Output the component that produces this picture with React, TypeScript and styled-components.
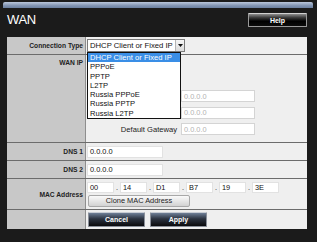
import React from "react";
import styled, { createGlobalStyle } from "styled-components";

const Global = createGlobalStyle`
  html, body { margin: 0; padding: 0; background: #1a1a1a; }
  body { font-family: "Liberation Sans", Arial, sans-serif; }
`;

const Frame = styled.div`
  width: 317px;
  height: 242px;
  background: #1b1b1b;
  overflow: hidden;
  display: flex;
  flex-direction: column;
`;

const TopBand = styled.div`
  height: 6px;
  margin: 2px 4px 0 3px;
  border-radius: 2px 2px 0 0;
  background: linear-gradient(#bac7db, #8194b2 60%, #6a7f9f);
`;

const Header = styled.div`
  height: 28px;
  margin-top: 1px;
  display: flex;
  align-items: flex-start;
  justify-content: space-between;
  padding: 4px 10px 0 7px;
  box-sizing: border-box;
`;

const Title = styled.div`
  color: #ffffff;
  font-size: 13px;
  line-height: 14px;
  letter-spacing: -0.3px;
`;

const DarkButton = styled.button<{ w: number; h: number }>`
  width: ${(p) => p.w}px;
  height: ${(p) => p.h}px;
  padding: 0;
  border: 1px solid #8a8f99;
  border-top-color: #c8ccd4;
  border-radius: 1px;
  background: linear-gradient(#6f7f97 0%, #2c3340 45%, #0a0a0c 100%);
  color: #ffffff;
  font-family: "Liberation Sans", Arial, sans-serif;
  font-weight: bold;
  font-size: 7px;
  line-height: 1;
  cursor: pointer;
`;

const HelpButton = styled(DarkButton)`
  border-color: #9a9a9a;
  border-top-color: #d0d0d0;
  background: linear-gradient(#8d8d8d 0%, #3a3a3a 30%, #000 60%, #0c0c0c 100%);
`;

const Panel = styled.div`
  margin-left: 7px;
  width: 300px;
  display: flex;
  flex-direction: column;
`;

const Row = styled.div<{ h: number; last?: boolean }>`
  display: grid;
  grid-template-columns: 79px 1fr;
  height: ${(p) => p.h}px;
  border-bottom: ${(p) => (p.last ? "none" : "1px solid #6c6c6c")};
`;

const Label = styled.div<{ top?: boolean }>`
  background: #c8c8c8;
  border-right: 1px solid #8e8e8e;
  display: flex;
  justify-content: flex-end;
  align-items: ${(p) => (p.top ? "flex-start" : "center")};
  padding: ${(p) => (p.top ? "4px 2px 0 0" : "0 2px 0 0")};
  font-size: 6.7px;
  font-weight: bold;
  color: #222;
  white-space: nowrap;
`;

const Value = styled.div<{ column?: boolean; pt?: number; pl?: number; gap?: number }>`
  background: #efefef;
  display: flex;
  flex-direction: ${(p) => (p.column ? "column" : "row")};
  align-items: ${(p) => (p.column ? "flex-start" : "center")};
  padding-top: ${(p) => p.pt ?? 0}px;
  padding-left: ${(p) => p.pl ?? 1}px;
  gap: ${(p) => p.gap ?? 0}px;
  font-size: 7.6px;
  color: #111;
  position: relative;
`;

const SelectWrap = styled.div`
  position: relative;
`;

const SelectBox = styled.div`
  width: 98px;
  height: 13px;
  box-sizing: border-box;
  border: 1px solid #7b7b7b;
  background: #fff;
  display: flex;
  align-items: center;
  font-size: 7.7px;
  color: #111;
`;

const SelectText = styled.span`
  flex: 1;
  padding-left: 2px;
  white-space: nowrap;
  overflow: hidden;
`;

const Arrow = styled.span`
  width: 8px;
  height: 11px;
  background: linear-gradient(#f6f6f6, #dcdcdc);
  border-left: 1px solid #b5b5b5;
  display: flex;
  align-items: center;
  justify-content: center;
`;

const DropList = styled.ul`
  position: absolute;
  top: 13px;
  left: 0;
  width: 94px;
  margin: 0;
  padding: 0;
  list-style: none;
  box-sizing: border-box;
  border: 1px solid #111;
  background: #fff;
  z-index: 5;
`;

const DropItem = styled.li<{ active?: boolean }>`
  height: 9.3px;
  line-height: 9.3px;
  padding-left: 2px;
  font-size: 7.6px;
  white-space: nowrap;
  background: ${(p) => (p.active ? "#3a8ee6" : "transparent")};
  color: ${(p) => (p.active ? "#fff" : "#111")};
`;

const SubRow = styled.div`
  display: flex;
  align-items: center;
  height: 12px;
  margin-bottom: 4.5px;
`;

const SubLabel = styled.span`
  width: 91px;
  margin-right: 4px;
  text-align: right;
  white-space: nowrap;
  color: #222;
`;

const TextBox = styled.div<{ w: number; h?: number; disabled?: boolean }>`
  width: ${(p) => p.w}px;
  height: ${(p) => p.h ?? 12}px;
  box-sizing: border-box;
  border: 1px solid ${(p) => (p.disabled ? "#d4d4d4" : "#e2e2e2")};
  background: #fff;
  color: ${(p) => (p.disabled ? "#b3b3b3" : "#111")};
  font-size: 7.4px;
  display: flex;
  align-items: center;
  padding-left: 2px;
`;

const MacLine = styled.div`
  display: flex;
  align-items: center;
`;

const MacDot = styled.span`
  width: 6px;
  text-align: center;
  font-size: 7.4px;
  color: #111;
`;

const LightButton = styled.button`
  width: 102px;
  height: 12px;
  margin-left: 1px;
  padding: 0;
  border: 1px solid #a8a8a8;
  border-radius: 2px;
  background: linear-gradient(#fafafa, #e2e2e2 60%, #d2d2d2);
  font-family: "Liberation Sans", Arial, sans-serif;
  font-size: 7.4px;
  color: #222;
  line-height: 1;
`;

const ButtonBar = styled.div`
  display: flex;
  gap: 5px;
  padding: 2px 0 0 1px;
`;

const options = [
  "DHCP Client or Fixed IP",
  "PPPoE",
  "PPTP",
  "L2TP",
  "Russia PPPoE",
  "Russia PPTP",
  "Russia L2TP",
];

const mac = ["00", "14", "D1", "B7", "19", "3E"];

export default function App() {
  return (
    <>
      <Global />
      <Frame>
        <TopBand />
        <Header>
          <Title>WAN</Title>
          <HelpButton w={59} h={14}>Help</HelpButton>
        </Header>
        <Panel>
          <Row h={17}>
            <Label>Connection Type</Label>
            <Value>
              <SelectWrap>
                <SelectBox>
                  <SelectText>DHCP Client or Fixed IP</SelectText>
                  <Arrow>
                    <svg width="5" height="3" viewBox="0 0 5 3">
                      <path d="M0 0h5L2.5 3z" fill="#111" />
                    </svg>
                  </Arrow>
                </SelectBox>
                <DropList>
                  {options.map((o, i) => (
                    <DropItem key={o} active={i === 0}>
                      {o}
                    </DropItem>
                  ))}
                </DropList>
              </SelectWrap>
            </Value>
          </Row>
          <Row h={87}>
            <Label top>WAN IP</Label>
            <Value column pt={35} pl={0}>
              <SubRow>
                <SubLabel>IP Address</SubLabel>
                <TextBox w={74} disabled>0.0.0.0</TextBox>
              </SubRow>
              <SubRow>
                <SubLabel>Subnet Mask</SubLabel>
                <TextBox w={74} disabled>0.0.0.0</TextBox>
              </SubRow>
              <SubRow>
                <SubLabel>Default Gateway</SubLabel>
                <TextBox w={74} disabled>0.0.0.0</TextBox>
              </SubRow>
            </Value>
          </Row>
          <Row h={17}>
            <Label>DNS 1</Label>
            <Value>
              <TextBox w={76}>0.0.0.0</TextBox>
            </Value>
          </Row>
          <Row h={17}>
            <Label>DNS 2</Label>
            <Value>
              <TextBox w={76}>0.0.0.0</TextBox>
            </Value>
          </Row>
          <Row h={30}>
            <Label>MAC Address</Label>
            <Value column pt={3} gap={2}>
              <MacLine>
                {mac.map((m, i) => (
                  <React.Fragment key={i}>
                    {i > 0 && <MacDot>.</MacDot>}
                    <TextBox w={27} h={11}>{m}</TextBox>
                  </React.Fragment>
                ))}
              </MacLine>
              <LightButton>Clone MAC Address</LightButton>
            </Value>
          </Row>
          <Row h={19} last>
            <Label />
            <Value column pl={1}>
              <ButtonBar>
                <DarkButton w={57} h={15}>Cancel</DarkButton>
                <DarkButton w={57} h={15}>Apply</DarkButton>
              </ButtonBar>
            </Value>
          </Row>
        </Panel>
      </Frame>
    </>
  );
}
